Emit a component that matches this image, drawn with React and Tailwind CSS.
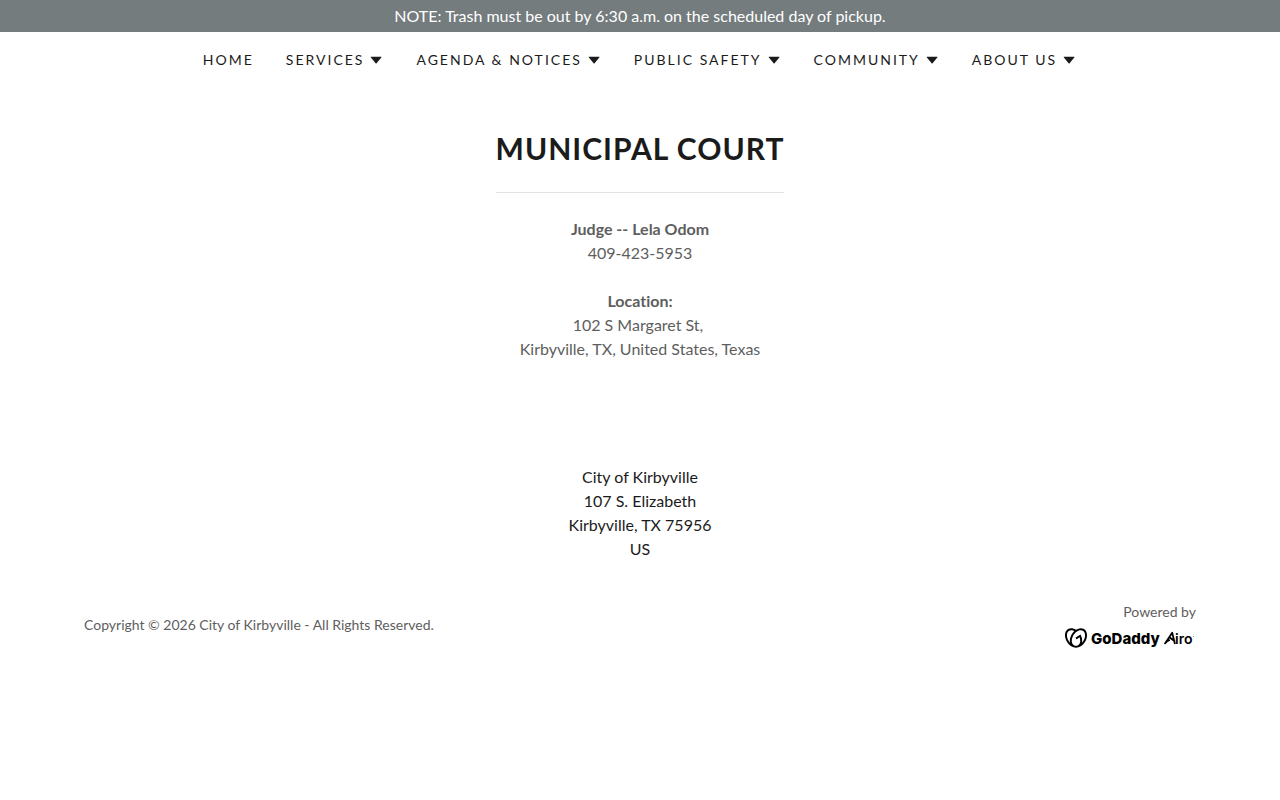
import { SiGodaddy } from "react-icons/si"

const navItems = [
  { label: "Home", menu: false },
  { label: "Services", menu: true },
  { label: "Agenda & Notices", menu: true },
  { label: "Public Safety", menu: true },
  { label: "Community", menu: true },
  { label: "About Us", menu: true },
]

const Caret = () => (
  <svg viewBox="0 0 16 16" className="w-4 h-4" fill="currentColor" aria-hidden="true">
    <path d="M3 4.7h10.2c.3 0 .5.3.3.6l-4.9 5.9a.7.7 0 0 1-1 0L2.7 5.3c-.2-.3 0-.6.3-.6z" />
  </svg>
)

const NavBar = () => (
  <nav className="flex justify-center py-4">
    <ul className="flex gap-8 text-sm leading-6 tracking-[2px] uppercase">
      {navItems.map((item) => (
        <li key={item.label}>
          {item.menu ? (
            <button type="button" className="flex items-center gap-1 uppercase cursor-pointer" aria-haspopup="true">
              {item.label}
              <Caret />
            </button>
          ) : (
            <a href="#" className="block">
              {item.label}
            </a>
          )}
        </li>
      ))}
    </ul>
  </nav>
)

const GoDaddyLogo = () => (
  <a href="#" className="flex items-center gap-1 h-[26px] pt-0.5 text-black" aria-label="GoDaddy Airo">
    <SiGodaddy className="w-[22px] h-[22px]" />
    <svg viewBox="0 0 105 22" className="w-[105px] h-[22px]" fill="currentColor" aria-hidden="true">
      <text x="0" y="17" className="font-['Inter',sans-serif] font-extrabold text-[15px]">
        GoDaddy
      </text>
      <path
        d="M78.2 13.2 C76.6 13.8 75.4 14.8 74 16.4 L81.2 5.8 L83.8 16.4 M78.4 10.2 L83.4 14"
        fill="none"
        stroke="currentColor"
        strokeWidth="1.8"
        strokeLinecap="round"
        strokeLinejoin="round"
      />
      <text x="84" y="17" className="font-['Inter',sans-serif] font-semibold text-[14px]">
        iro
      </text>
      <circle cx="102.6" cy="9.5" r="0.4" />
    </svg>
  </a>
)

const App = () => {
  return (
    <div className="bg-white font-['Lato',sans-serif] text-[#1b1b1b] [font-variant-ligatures:none]">
      <div className="bg-[#747c7e] text-white text-center leading-6 py-1">
        NOTE: Trash must be out by 6:30 a.m. on the scheduled day of pickup.
      </div>

      <header>
        <NavBar />
      </header>

      <main className="flex flex-col items-center px-6 pt-10 pb-14 text-center">
        <h1 className="pb-6 border-b border-[#e2e2e2] text-[30px] leading-10 font-bold tracking-[1px] uppercase">
          Municipal Court
        </h1>
        <div className="mt-6 leading-6 text-[#5e5e5e]">
          <p className="font-bold">Judge -- Lela Odom</p>
          <p>409-423-5953</p>
          <p className="mt-6 font-bold">Location:</p>
          <p>102 S Margaret St,&nbsp;</p>
          <p>Kirbyville, TX, United States, Texas</p>
        </div>
      </main>

      <footer className="max-w-[1160px] mx-auto px-6 pt-12">
        <address className="not-italic text-center leading-6">
          <p>City of Kirbyville</p>
          <p>107 S. Elizabeth</p>
          <p>Kirbyville, TX 75956</p>
          <p>US</p>
        </address>
        <div className="flex items-center justify-between mt-[39px] text-sm leading-6 text-[#5e5e5e]">
          <p>Copyright © 2026 City of Kirbyville - All Rights Reserved.</p>
          <div className="flex flex-col items-end">
            <p>Powered by</p>
            <GoDaddyLogo />
          </div>
        </div>
      </footer>
    </div>
  )
}

export default App
